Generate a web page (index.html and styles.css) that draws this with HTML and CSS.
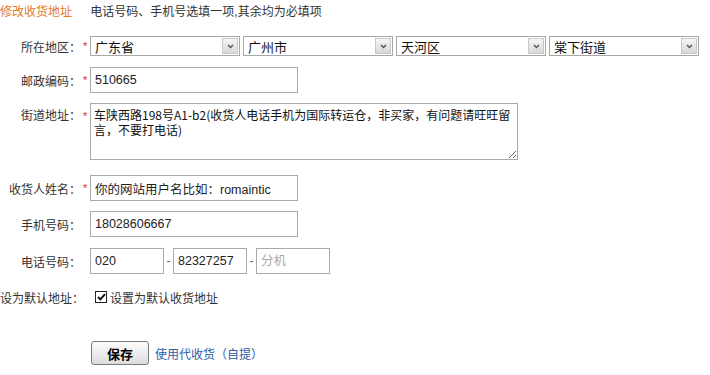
FILE: index.html
```html
<!DOCTYPE html>
<html lang="zh-CN">
<head>
    <meta charset="UTF-8">
    <title>修改收货地址</title>
    <link rel="stylesheet" href="styles.css">
</head>
<body>
    <div class="head">
        <span class="head-title">修改收货地址</span>
        <span class="head-tip">电话号码、手机号选填一项,其余均为必填项</span>
    </div>

    <div class="row row-area">
        <label class="row-label">所在地区：</label><span class="req">*</span>
        <div class="area-list">
            <div class="pick">
                <select><option>广东省</option></select>
                <span class="pick-arrow"><svg width="7" height="5" viewBox="0 0 7 5"><polyline points="1,1 3.5,3.6 6,1" fill="none" stroke="#555" stroke-width="1.4"/></svg></span>
            </div>
            <div class="pick">
                <select><option>广州市</option></select>
                <span class="pick-arrow"><svg width="7" height="5" viewBox="0 0 7 5"><polyline points="1,1 3.5,3.6 6,1" fill="none" stroke="#555" stroke-width="1.4"/></svg></span>
            </div>
            <div class="pick">
                <select><option>天河区</option></select>
                <span class="pick-arrow"><svg width="7" height="5" viewBox="0 0 7 5"><polyline points="1,1 3.5,3.6 6,1" fill="none" stroke="#555" stroke-width="1.4"/></svg></span>
            </div>
            <div class="pick">
                <select><option>棠下街道</option></select>
                <span class="pick-arrow"><svg width="7" height="5" viewBox="0 0 7 5"><polyline points="1,1 3.5,3.6 6,1" fill="none" stroke="#555" stroke-width="1.4"/></svg></span>
            </div>
        </div>
    </div>

    <div class="row row-zip">
        <label class="row-label">邮政编码：</label><span class="req">*</span>
        <input class="field field-wide" type="text" value="510665">
    </div>

    <div class="row row-street">
        <label class="row-label">街道地址：</label><span class="req">*</span>
        <textarea class="street">车陕西路198号A1-b2(收货人电话手机为国际转运仓，非买家，有问题请旺旺留言，不要打电话)</textarea>
    </div>

    <div class="row row-name">
        <label class="row-label">收货人姓名：</label><span class="req">*</span>
        <input class="field field-wide" type="text" value="你的网站用户名比如：romaintic">
    </div>

    <div class="row row-mobile">
        <label class="row-label">手机号码：</label><span class="req"></span>
        <input class="field field-wide" type="text" value="18028606667">
    </div>

    <div class="row row-phone">
        <label class="row-label">电话号码：</label><span class="req"></span>
        <input class="field field-short" type="text" value="020">
        <span class="dash">-</span>
        <input class="field field-short" type="text" value="82327257">
        <span class="dash">-</span>
        <input class="field field-short" type="text" placeholder="分机">
    </div>

    <div class="row row-default">
        <label class="row-label">设为默认地址：</label><span class="req"></span>
        <label class="check">
            <span class="check-box"><svg width="9" height="8" viewBox="0 0 9 8"><polyline points="1,4 3.4,6.4 8,1.2" fill="none" stroke="#111" stroke-width="2"/></svg></span>
            设置为默认收货地址
        </label>
    </div>

    <div class="row row-actions">
        <span class="row-label"></span><span class="req"></span>
        <button class="save">保存</button>
        <a class="self-pick" href="#">使用代收货（自提）</a>
    </div>
</body>
</html>
```

FILE: styles.css
```css
body {
    margin: 0;
    font-family: "Liberation Sans", "Noto Sans CJK SC", sans-serif;
    font-size: 12px;
    color: #333;
    background: #fff;
}
.head {
    height: 24px;
    line-height: 24px;
}
.head-title {
    color: #e5781e;
}
.head-tip {
    margin-left: 15px;
}
.row {
    display: flex;
    align-items: center;
}
.row-label {
    display: flex;
    justify-content: flex-end;
    width: 81px;
    flex-shrink: 0;
    white-space: nowrap;
    color: #333;
}
.req {
    width: 9px;
    flex-shrink: 0;
    padding-left: 2px;
    box-sizing: border-box;
    color: #d9232e;
    font-size: 11px;
}
.row-area {
    margin-top: 12px;
    height: 20px;
}
.area-list {
    display: flex;
    gap: 3px;
}
.pick {
    display: flex;
    width: 150px;
    height: 20px;
    box-sizing: border-box;
    border: 1px solid #a7a7a7;
    background: #fff;
}
.pick select {
    flex: 1;
    min-width: 0;
    -webkit-appearance: none;
    appearance: none;
    border: none;
    outline: none;
    background: transparent;
    padding: 0 0 0 4px;
    margin: 0;
    font-family: "Noto Sans CJK SC", sans-serif;
    font-size: 13px;
    color: #111;
}
.pick-arrow {
    display: flex;
    align-items: center;
    justify-content: center;
    width: 16px;
    margin: 1px;
    box-sizing: border-box;
    border: 1px solid #c9c9c9;
    background: linear-gradient(#f6f6f6, #d8d8d8);
}
.field {
    height: 26px;
    box-sizing: border-box;
    border: 1px solid #aaa;
    padding: 0 4px;
    margin: 0;
    font-family: "Liberation Sans", "Noto Sans CJK SC", sans-serif;
    font-size: 12.5px;
    color: #222;
    outline: none;
}
.field::placeholder {
    color: #aaa;
}
.field-wide {
    width: 208px;
}
.field-short {
    width: 74px;
    height: 26px;
}
.dash {
    width: 9px;
    text-align: center;
    color: #666;
}
.row-zip {
    margin-top: 11px;
}
.row-street {
    margin-top: 10px;
    align-items: flex-start;
}
.row-street .row-label,
.row-street .req {
    line-height: 18px;
    padding-top: 4px;
}
.street {
    width: 428px;
    height: 57px;
    box-sizing: border-box;
    border: 1px solid #aaa;
    padding: 3px 3px;
    margin: 0;
    font-family: "Noto Sans CJK SC", sans-serif;
    font-size: 12px;
    line-height: 15px;
    color: #111;
    outline: none;
}
.row-name {
    margin-top: 15px;
}
.row-mobile {
    margin-top: 10px;
}
.row-phone {
    margin-top: 11px;
}
.row-default {
    margin-top: 13px;
    height: 20px;
}
.row-default .row-label {
    width: 84px;
}
.row-default .req {
    width: 6px;
}
.check {
    display: flex;
    align-items: center;
    gap: 3px;
    margin-left: 5px;
    color: #333;
}
.check-box {
    display: flex;
    align-items: center;
    justify-content: center;
    width: 12px;
    height: 12px;
    box-sizing: border-box;
    border: 1px solid #222;
    background: #fff;
}
.row-actions {
    margin-top: 34px;
}
.save {
    width: 58px;
    height: 24px;
    margin-left: 1px;
    border: 1px solid #7a7a7a;
    border-radius: 3px;
    background: linear-gradient(#fdfdfd, #dcdcdc);
    font-family: "Noto Sans CJK SC", sans-serif;
    font-size: 13px;
    font-weight: bold;
    color: #000;
    padding: 0;
}
.self-pick {
    margin-left: 6px;
    color: #2b5ca8;
    text-decoration: none;
}
```
